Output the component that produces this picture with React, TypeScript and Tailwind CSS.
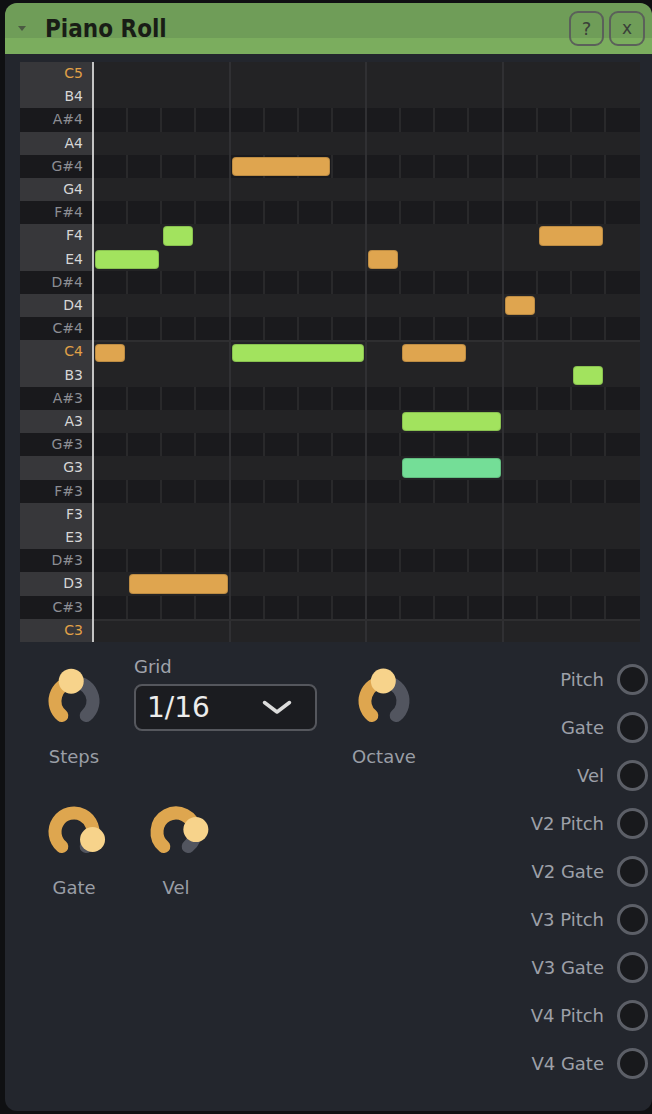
import React from "react";

const KEYS = [
  "C5", "B4", "A#4", "A4", "G#4", "G4", "F#4", "F4", "E4", "D#4", "D4", "C#4", "C4",
  "B3", "A#3", "A3", "G#3", "G3", "F#3", "F3", "E3", "D#3", "D3", "C#3", "C3",
];

const COL_START = [
  "col-start-1", "col-start-2", "col-start-3", "col-start-4",
  "col-start-5", "col-start-6", "col-start-7", "col-start-8",
  "col-start-9", "col-start-10", "col-start-11", "col-start-12",
  "col-start-13", "col-start-14", "col-start-15", "col-start-16",
];
const SPAN = ["", "col-span-1", "col-span-2", "col-span-3", "col-span-4"];

const ORANGE = "bg-[#dfa54f]";
const GREEN = "bg-[#a2e35e]";
const TEAL = "bg-[#74de97]";

const NOTES = [
  { row: 4, col: 4, len: 3, color: ORANGE },
  { row: 7, col: 2, len: 1, color: GREEN },
  { row: 7, col: 13, len: 2, color: ORANGE },
  { row: 8, col: 0, len: 2, color: GREEN },
  { row: 8, col: 8, len: 1, color: ORANGE },
  { row: 10, col: 12, len: 1, color: ORANGE },
  { row: 12, col: 0, len: 1, color: ORANGE },
  { row: 12, col: 4, len: 4, color: GREEN },
  { row: 12, col: 9, len: 2, color: ORANGE },
  { row: 13, col: 14, len: 1, color: GREEN },
  { row: 15, col: 9, len: 3, color: GREEN },
  { row: 17, col: 9, len: 3, color: TEAL },
  { row: 22, col: 1, len: 3, color: ORANGE },
];

const OUTPUTS = ["Pitch", "Gate", "Vel", "V2 Pitch", "V2 Gate", "V3 Pitch", "V3 Gate", "V4 Pitch", "V4 Gate"];

function pt(a: number, r: number) {
  const rad = (a * Math.PI) / 180;
  return [35 + r * Math.sin(rad), 35 - r * Math.cos(rad)];
}

function arc(a1: number, a2: number, r: number) {
  const [x1, y1] = pt(a1, r);
  const [x2, y2] = pt(a2, r);
  const large = a2 - a1 > 180 ? 1 : 0;
  return `M ${x1} ${y1} A ${r} ${r} 0 ${large} 1 ${x2} ${y2}`;
}

function Knob({ angle, label, className = "" }: { angle: number; label: string; className?: string }) {
  const [hx, hy] = pt(angle, 20);
  return (
    <div className={`flex w-[70px] flex-col items-center ${className}`}>
      <svg width="70" height="70" viewBox="0 0 70 70">
        <path d={arc(angle, 140, 19)} stroke="#52555f" strokeWidth="13" fill="none" strokeLinecap="round" />
        <path d={arc(-140, angle, 19)} stroke="#dea64f" strokeWidth="13" fill="none" strokeLinecap="round" />
        <circle cx={hx} cy={hy} r="12.5" fill="#f7d38b" />
      </svg>
      <span className="mt-[9px] whitespace-nowrap text-[18px] leading-[24px] text-[#9a9ea6]">{label}</span>
    </div>
  );
}

function RollRow({ index }: { index: number }) {
  const name = KEYS[index];
  const black = name.includes("#");
  const isC = name.startsWith("C") && !black;
  const notes = NOTES.filter((n) => n.row === index);

  const keyBg = black ? "bg-[#19191c]" : "bg-[#37373a]";
  const keyText = isC ? "text-[#e2a147]" : black ? "text-[#8c8d93]" : "text-[#d6d6d6]";

  return (
    <div className="flex min-h-0">
      <div className={`flex w-[72px] items-center justify-end pr-[9px] text-[14px] ${keyBg} ${keyText}`}>
        {name}
      </div>
      <div className="w-[2px] bg-[#c4c4c4]" />
      <div
        className={`grid flex-1 grid-cols-16 ${black ? "bg-[#1a1a1d]" : "bg-[#232325]"} ${
          isC && index > 0 ? "border-t-2 border-[#2e2e30]" : ""
        }`}
      >
        {Array.from({ length: 16 }).map((_, c) => {
          let border = black ? "border-[#29292b]" : "border-[#232325]";
          if (c === 15) border = black ? "border-[#1a1a1d]" : "border-[#232325]";
          if (c === 3 || c === 7 || c === 11) border = "border-[#303033]";
          return <div key={c} className={`row-start-1 border-r-2 ${COL_START[c]} ${border}`} />;
        })}
        {notes.map((n, i) => (
          <div
            key={i}
            className={`row-start-1 my-[2px] ml-px mr-[3px] rounded-[4px] border border-black/15 ${COL_START[n.col]} ${SPAN[n.len]} ${n.color}`}
          />
        ))}
      </div>
    </div>
  );
}

export default function App() {
  return (
    <div className="h-[1114px] w-[652px] overflow-hidden bg-[#0f1012] pl-[5px] pt-[3px] font-['DejaVu_Sans',sans-serif]">
      <div className="flex h-[1108px] flex-col overflow-hidden rounded-[12px] bg-[#23262d]">
        {/* header */}
        <div className="flex h-[51px] shrink-0 items-center bg-[linear-gradient(to_bottom,#6f9d58_0,#6f9d58_35px,#7bad5e_35px)] pr-[7px]">
          <svg width="8" height="5" viewBox="0 0 8 5" className="ml-[13px]">
            <path d="M0 0 L8 0 L4 5 Z" fill="#4b5a42" />
          </svg>
          <span className="ml-[19px] font-['DejaVu_Sans_Condensed','DejaVu_Sans',sans-serif] text-[24px] font-bold leading-none text-[#191d16] [font-stretch:condensed]">
            Piano Roll
          </span>
          <div className="ml-auto flex gap-[5px]">
            <button className="flex h-[35px] w-[35px] items-center justify-center rounded-[9px] border-2 border-[#5b605a] text-[18px] text-[#3a4038]">
              ?
            </button>
            <button className="flex h-[35px] w-[36px] items-center justify-center rounded-[9px] border-2 border-[#5b605a] text-[17px] text-[#3a4038]">
              x
            </button>
          </div>
        </div>

        {/* piano roll grid */}
        <div className="pl-[15px] pr-[12px] pt-[8px]">
          <div className="grid h-[580px] grid-rows-[repeat(25,minmax(0,1fr))]">
            {KEYS.map((_, i) => (
              <RollRow key={i} index={i} />
            ))}
          </div>
        </div>

        {/* controls */}
        <div className="flex pt-[13px]">
          <div className="flex-1 pl-[34px]">
            <div className="flex items-start">
              <Knob angle={-8} label="Steps" className="mt-[11px]" />
              <div className="ml-[25px] flex flex-col">
                <span className="text-[18px] leading-[24px] text-[#a0a3ab]">Grid</span>
                <div className="mt-[5px] flex h-[47px] w-[183px] items-center justify-between rounded-[8px] border-2 border-[#55575d] bg-[#1b1c20] pl-[11px] pr-[23px]">
                  <span className="text-[28px] leading-none text-[#ececec]">1/16</span>
                  <svg width="30" height="15" viewBox="0 0 30 15">
                    <polyline points="2.5,2.5 15,12 27.5,2.5" fill="none" stroke="#dcdcdc" strokeWidth="3.5" strokeLinecap="round" strokeLinejoin="round" />
                  </svg>
                </div>
              </div>
              <Knob angle={-2} label="Octave" className="ml-[32px] mt-[11px]" />
            </div>
            <div className="mt-[28px] flex gap-[32px]">
              <Knob angle={112} label="Gate" />
              <Knob angle={83} label="Vel" />
            </div>
          </div>
          <div className="flex flex-col pr-[4px]">
            {OUTPUTS.map((o) => (
              <div key={o} className="flex h-[48px] items-center justify-end gap-[13px]">
                <span className="text-[18px] text-[#9da0a8]">{o}</span>
                <div className="h-[31px] w-[31px] rounded-full border-[3px] border-[#5c5f67] bg-[#18191c]" />
              </div>
            ))}
          </div>
        </div>
      </div>
    </div>
  );
}
